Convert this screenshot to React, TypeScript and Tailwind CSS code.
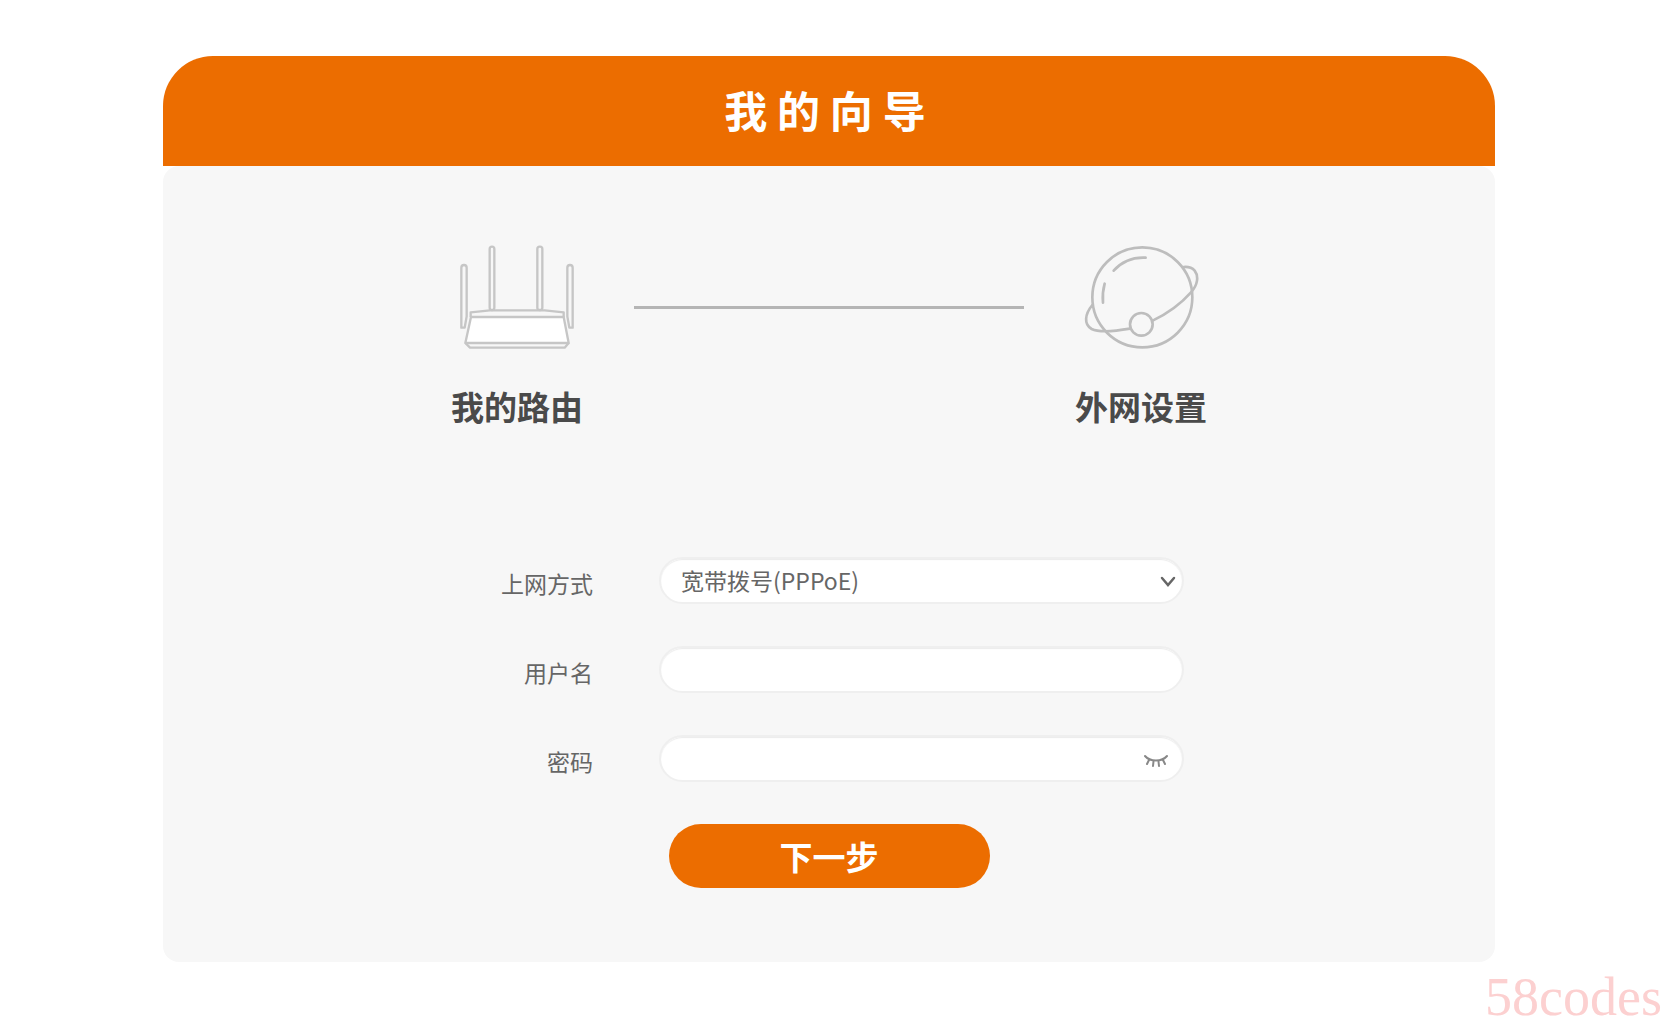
import React, { useState } from 'react';

const RouterIcon = () => (
    <svg className="w-[116px] h-[105px]" viewBox="57 42 348 315" fill="none" stroke="#c6c6c6" strokeWidth="7" strokeLinejoin="round" aria-hidden="true">
        <rect x="149" y="47" width="14" height="190" rx="7" />
        <rect x="292" y="47" width="15" height="190" rx="7" />
        <path d="M64 290V110a7 7 0 0 1 16 0V256L74 290Z" />
        <path d="M398 290V110a8 8 0 0 0 -16 0V256L388 290Z" />
        <path d="M92 258V244L150 238H314L371 244V258" />
        <path fill="#fff" d="M93 258H371L386 336H76Z" />
        <path d="M76 336L90 350H374L386 336" />
    </svg>
);

const GlobeIcon = () => (
    <svg className="w-[116px] h-[105px]" viewBox="40 42 348 315" fill="none" stroke="#bdbdbd" strokeWidth="8" strokeLinecap="round" aria-hidden="true">
        <circle cx="218" cy="199" r="150" />
        <circle cx="215" cy="280" r="34" />
        <path d="M132 119C156 92 190 78 228 80" />
        <path d="M105 158C100 176 98 196 100 215" />
        <path d="M68 222C45 250 42 280 66 294C90 306 140 300 181 293" />
        <path d="M249 269C292 248 334 218 364 184C384 162 388 136 375 119C367 110 354 107 342 108" />
    </svg>
);

const ClosedEyeIcon = () => (
    <svg className="w-6 h-4" viewBox="0 0 24 16" fill="none" stroke="currentColor" strokeWidth="2" strokeLinecap="round" aria-hidden="true">
        <path d="M1 3C6 9 18 9 23 3" />
        <path d="M5 7L3 11M9.500 8.500L9 13M14.500 8.500L15 13M19 7L21 11" />
    </svg>
);

const inputClass =
    'block w-full h-[47px] rounded-full border-2 border-[#efefef] bg-white px-5 text-[23px] text-[#666] shadow-[inset_0_1px_1px_#ececec] outline-none';

const Step = ({ icon, label }: { icon: React.ReactNode; label: string }) => (
    <div className="w-[234px] flex flex-col items-center">
        {icon}
        <h2 className="mt-8 text-[33px] leading-12 font-bold text-[#4a4a4a]">{label}</h2>
    </div>
);

const Field = ({ id, label, children }: { id: string; label: string; children: React.ReactNode }) => (
    <div className="flex items-center justify-between">
        <label htmlFor={id} className="flex-1 pt-1 text-right text-[23px] leading-8 text-[#666]">{label}</label>
        <div className="relative ml-[66px] w-[525px]">{children}</div>
    </div>
);

export default function App() {
    const [mode, setMode] = useState('pppoe');
    const [username, setUsername] = useState('');
    const [password, setPassword] = useState('');
    const [showPassword, setShowPassword] = useState(false);

    return (
        <div className="min-h-screen bg-white pt-14 pr-5 pb-16 font-['Noto_Sans_CJK_SC',sans-serif]">
            <main className="w-full max-w-[1332px] mx-auto">
                <header className="h-[110px] flex items-center justify-center rounded-t-[50px] bg-[#ec6d00] pr-2 pb-1">
                    <h1 className="text-[43px] leading-16 font-bold text-white">我 的 向 导</h1>
                </header>

                <section className="rounded-2xl bg-[#f7f7f7] pt-[79px] pb-[74px]">
                    <div className="flex items-start justify-center">
                        <Step icon={<RouterIcon />} label="我的路由" />
                        <div className="mt-[61px] w-[390px] h-[3px] bg-[#b5b5b5]" />
                        <Step icon={<GlobeIcon />} label="外网设置" />
                    </div>

                    <form className="mt-[127px] flex flex-col items-center gap-[42px]" onSubmit={(e) => e.preventDefault()}>
                        <div className="w-[710px] flex flex-col gap-[42px]">
                            <Field id="mode" label="上网方式">
                                <select id="mode" value={mode} onChange={(e) => setMode(e.target.value)} className={`${inputClass} appearance-none`}>
                                    <option value="pppoe">宽带拨号(PPPoE)</option>
                                    <option value="dhcp">自动获取(DHCP)</option>
                                </select>
                                <svg className="absolute right-2 top-4 w-4 h-4 pointer-events-none" viewBox="0 0 16 16" fill="none" stroke="#666" strokeWidth="2.500" strokeLinecap="round" aria-hidden="true">
                                    <path d="M2 5L8 12L14 5" />
                                </svg>
                            </Field>
                            <Field id="username" label="用户名">
                                <input id="username" type="text" value={username} onChange={(e) => setUsername(e.target.value)} className={inputClass} />
                            </Field>
                            <Field id="password" label="密码">
                                <input id="password" type={showPassword ? 'text' : 'password'} value={password} onChange={(e) => setPassword(e.target.value)} className={inputClass} />
                                <button type="button" aria-label="显示密码" onClick={() => setShowPassword(!showPassword)} className="absolute right-4 top-[18px] text-[#888]">
                                    <ClosedEyeIcon />
                                </button>
                            </Field>
                        </div>

                        <button type="submit" className="w-[321px] h-16 rounded-full bg-[#ec6d00] text-[33px] leading-12 font-bold text-white">
                            下一步
                        </button>
                    </form>
                </section>
            </main>

            <div className="fixed right-4 bottom-0 font-['Liberation_Serif',serif] text-[54px] leading-15 text-[#fcd0d0]">58codes</div>
        </div>
    );
}
